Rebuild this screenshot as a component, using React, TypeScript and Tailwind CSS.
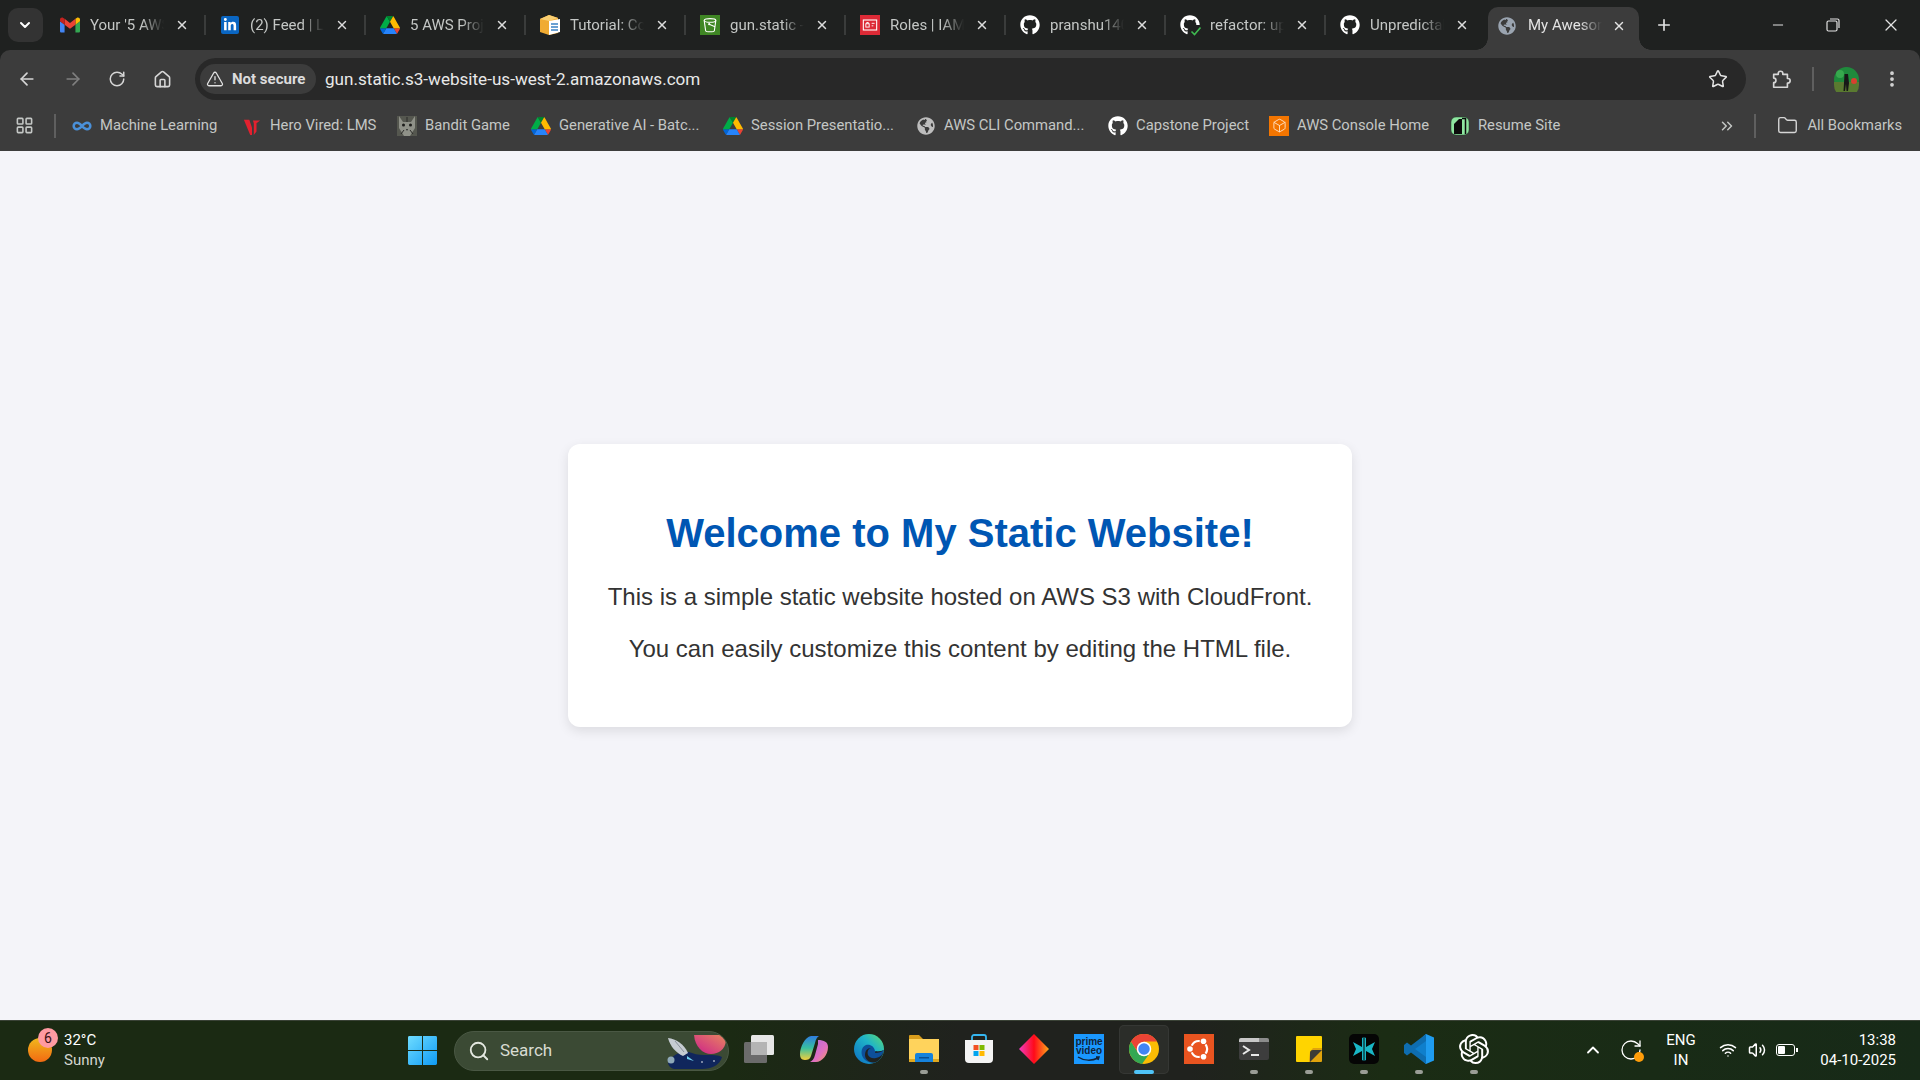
import React from "react";
import {
    ArrowLeft,
    ArrowRight,
    Box,
    ChevronDown,
    ChevronUp,
    ChevronsRight,
    EllipsisVertical,
    Folder,
    House,
    Infinity as InfinityIcon,
    LayoutGrid,
    Minus,
    Plus,
    RotateCw,
    Search,
    Star,
    TriangleAlert,
    Volume2,
    Wifi,
    X,
} from "lucide-react";
import { FaGithub, FaGlobeAmericas, FaLinkedinIn } from "react-icons/fa";
import { SiOpenai } from "react-icons/si";

const Gmail = () => (
    <svg viewBox="0 0 24 24" className="w-5 h-5">
        <path d="M1.6 21H5.5v-9.3L0 7.6v11.8C0 20.300.7 21 1.6 21z" fill="#4285f4" />
        <path d="M18.500 21h3.900c.9 0 1.600-.7 1.600-1.600V7.600l-5.500 4.100z" fill="#34a853" />
        <path d="M18.500 4.600v7.100L24 7.600V5.500c0-2.100-2.300-3.200-3.900-2z" fill="#fbbc04" />
        <path d="M5.500 11.700V4.600L12 9.500l6.500-4.900v7.100L12 16.600z" fill="#ea4335" />
        <path d="M0 5.500v2.100l5.500 4.100V4.600L3.900 3.500C2.300 2.300 0 3.400 0 5.500z" fill="#c5221f" />
    </svg>
);

const Drive = () => (
    <svg viewBox="0 0 87.300 78" className="w-5 h-5">
        <path d="m6.600 66.850 3.850 6.650c.8 1.400 1.950 2.500 3.300 3.300l13.750-23.800h-27.500c0 1.550.4 3.100 1.200 4.500z" fill="#0066da" />
        <path d="m43.650 25-13.750-23.800c-1.350.8-2.500 1.900-3.300 3.300l-25.400 44a9.060 9.060 0 0 0 -1.200 4.500h27.500z" fill="#00ac47" />
        <path d="m73.550 76.800c1.350-.8 2.500-1.900 3.300-3.300l1.600-2.750 7.650-13.250c.8-1.400 1.200-2.950 1.200-4.500h-27.502l5.852 11.500z" fill="#ea4335" />
        <path d="m43.650 25 13.750-23.800c-1.350-.8-2.900-1.200-4.500-1.200h-18.500c-1.600 0-3.150.45-4.500 1.200z" fill="#00832d" />
        <path d="m59.800 53h-32.300l-13.750 23.800c1.350.8 2.900 1.200 4.500 1.200h50.800c1.600 0 3.150-.45 4.500-1.200z" fill="#2684fc" />
        <path d="m73.400 26.500-12.700-22c-.8-1.400-1.950-2.500-3.300-3.300l-13.750 23.800 16.150 28h27.450c0-1.550-.4-3.100-1.200-4.500z" fill="#ffba00" />
    </svg>
);

const LinkedIn = () => (
    <div className="w-[18px] h-[18px] mx-px bg-[#0a66c2] rounded-[2px] flex items-center justify-center text-white">
        <FaLinkedinIn size={14} />
    </div>
);

const TutorialBox = () => (
    <svg viewBox="0 0 20 20" className="w-5 h-5">
        <path d="M0 4l9-4 9 3v15l-9 2-9-3z" fill="#f0ab32" />
        <path d="M0 4l9-4 9 3-9 3z" fill="#f9cf72" />
        <path d="M9 6l11-2v13l-11 3z" fill="#fff" />
        <path d="M11 9h7M11 12h7M11 15h7" stroke="#3b82c4" strokeWidth="1.400" />
    </svg>
);

const S3Icon = () => (
    <svg viewBox="0 0 24 24" className="w-5 h-5">
        <rect width="24" height="24" fill="#3f8624" />
        <ellipse cx="12" cy="6.500" rx="7" ry="2.200" fill="none" stroke="#fff" strokeWidth="1.300" />
        <path d="M5 6.500l1.800 12.500c.5 1.500 9.900 1.500 10.400 0L19 6.500" fill="none" stroke="#fff" strokeWidth="1.300" />
        <path d="M11 11l7 3" stroke="#fff" strokeWidth="1.300" />
        <circle cx="11" cy="11" r="1.300" fill="#fff" />
    </svg>
);

const IamIcon = () => (
    <svg viewBox="0 0 24 24" className="w-5 h-5">
        <rect width="24" height="24" fill="#dd2a36" />
        <rect x="4" y="6" width="16" height="12" fill="none" stroke="#fff" strokeWidth="1.300" />
        <rect x="7" y="10.500" width="4" height="4" fill="none" stroke="#fff" strokeWidth="1.100" />
        <path d="M8 10.500V9h2v1.500M14 10h3.500M14 13h2" stroke="#fff" strokeWidth="1.100" fill="none" />
    </svg>
);

const GithubCheck = () => (
    <div className="relative w-5 h-5 text-white">
        <FaGithub size={20} />
        <svg viewBox="0 0 12 12" className="absolute -right-0.5 -bottom-0.5 w-3 h-3">
            <rect width="12" height="12" fill="#1f2120" />
            <path d="M1.500 6.500l3 3 6-7" fill="none" stroke="#3fb950" strokeWidth="1.600" />
        </svg>
    </div>
);

const HeroVired = () => (
    <svg viewBox="0 0 20 20" className="w-[18px] h-5">
        <path d="M1 3h6l3 9v8H8z" fill="#e3212f" />
        <path d="M11 4h8l-4 3v9l-3 4V7z" fill="#e3212f" />
    </svg>
);

const BanditCat = () => (
    <svg viewBox="0 0 20 20" className="w-5 h-5">
        <rect width="20" height="20" fill="#55574f" />
        <path d="M2 0l4 6h8l4-6v12l-5 8H7l-5-8z" fill="#8f9188" />
        <circle cx="6.500" cy="9" r="1.500" fill="#1c1c1a" />
        <circle cx="13.500" cy="9" r="1.500" fill="#1c1c1a" />
        <path d="M9 13h2l-1 2z" fill="#2a2a28" />
        <path d="M4 18l3-4M16 18l-3-4M10 1v5" stroke="#2a2a28" strokeWidth="1" />
    </svg>
);

const AwsConsole = () => (
    <div className="w-5 h-5 bg-[#f37500] flex items-center justify-center text-[#ffe0c2]">
        <Box size={15} strokeWidth={1.500} />
    </div>
);

const ResumeIcon = () => (
    <svg viewBox="0 0 20 20" className="w-5 h-5">
        <rect x="1" y="1" width="18" height="18" rx="5" fill="#8ee6a0" stroke="#1d3d27" strokeWidth="0.500" />
        <path d="M4 18V8l5-5h3v15z" fill="#0c0c0c" />
        <path d="M12 2.500h3.500V18" fill="none" stroke="#0c0c0c" strokeWidth="1.500" />
    </svg>
);

const tabs = [
    { title: "Your '5 AWS Projects", icon: <Gmail /> },
    { title: "(2) Feed | LinkedIn", icon: <LinkedIn /> },
    { title: "5 AWS Projects", icon: <Drive /> },
    { title: "Tutorial: Configuring", icon: <TutorialBox /> },
    { title: "gun.static - S3 bucket", icon: <S3Icon /> },
    { title: "Roles | IAM | Global", icon: <IamIcon /> },
    { title: "pranshu1402/aws", icon: <FaGithub size={20} className="text-white" /> },
    { title: "refactor: update", icon: <GithubCheck /> },
    { title: "Unpredictable", icon: <FaGithub size={20} className="text-white" /> },
];

const bookmarks = [
    { label: "Machine Learning", cls: "w-[170px]", icon: <InfinityIcon size={20} strokeWidth={3} className="text-[#4a90d9]" /> },
    { label: "Hero Vired: LMS", cls: "w-[155px]", icon: <HeroVired /> },
    { label: "Bandit Game", cls: "w-[134px]", icon: <BanditCat /> },
    { label: "Generative AI - Batc...", cls: "w-[192px]", icon: <Drive /> },
    { label: "Session Presentatio...", cls: "w-[193px]", icon: <Drive /> },
    { label: "AWS CLI Command...", cls: "w-[192px]", icon: <FaGlobeAmericas size={18} className="text-[#bdbdbd] mx-px" /> },
    { label: "Capstone Project", cls: "w-[161px]", icon: <FaGithub size={20} className="text-white" /> },
    { label: "AWS Console Home", cls: "w-[181px]", icon: <AwsConsole /> },
    { label: "Resume Site", cls: "w-[130px]", icon: <ResumeIcon /> },
];

const TabStrip = () => (
    <div className="flex items-center h-[50px] bg-[#1f2120] text-[#c4c7c5] text-[15px]">
        <button className="ml-2 mr-[3.5px] w-[34.5px] h-[34px] rounded-[10px] bg-[#333333] flex items-center justify-center text-white">
            <ChevronDown size={16} strokeWidth={3} />
        </button>
        {tabs.map((tab, i) => (
            <div
                key={tab.title}
                className={
                    i === tabs.length - 1
                        ? "flex items-center w-40 h-5 pl-[14px]"
                        : "flex items-center w-40 h-5 pl-[14px] border-r-2 border-[#3a3c3b]"
                }
            >
                <div className="w-5 shrink-0">{tab.icon}</div>
                <span className="ml-[10px] w-[74px] overflow-hidden whitespace-nowrap [mask-image:linear-gradient(to_right,black_70%,transparent)]">
                    {tab.title}
                </span>
                <X size={14} strokeWidth={2.500} className="ml-[11px] text-[#dcdcdc] shrink-0" />
            </div>
        ))}
        <div className="relative flex items-center self-end h-[43px] w-[151px] ml-[2px] pl-[10px] pb-[6px] bg-[#3c3c3c] rounded-t-[10px] text-[#e3e3e3]">
            <span className="absolute -left-3 bottom-0 w-3 h-3 bg-[radial-gradient(circle_at_0_0,transparent_11.500px,#3c3c3c_12px)]" />
            <span className="absolute -right-3 bottom-0 w-3 h-3 bg-[radial-gradient(circle_at_100%_0,transparent_11.500px,#3c3c3c_12px)]" />
            <FaGlobeAmericas size={18} className="text-[#9aa4b0] shrink-0" />
            <span className="ml-3 w-[74px] overflow-hidden whitespace-nowrap [mask-image:linear-gradient(to_right,black_70%,transparent)]">
                My Awesome Website
            </span>
            <X size={14} strokeWidth={2.500} className="ml-[10px] text-[#e3e3e3] shrink-0" />
        </div>
        <Plus size={18} strokeWidth={2.200} className="ml-4 text-[#e3e3e3]" />
        <div className="ml-auto flex items-center text-[#e3e3e3]">
            <Minus size={16} strokeWidth={1.500} className="mr-10" />
            <svg viewBox="0 0 14 14" className="w-[14px] h-[14px] mr-[41px]" fill="none" stroke="currentColor" strokeWidth="1.200">
                <rect x="1" y="3" width="10" height="10" rx="1.500" />
                <path d="M4 1h7.500A1.500 1.500 0 0 1 13 2.500V10" />
            </svg>
            <X size={20} strokeWidth={1.500} className="mr-[19px]" />
        </div>
    </div>
);

const Toolbar = () => (
    <div className="flex items-center h-[50px] pt-2 bg-[#3c3c3c] rounded-t-[10px] text-[#d6d6d6]">
        <ArrowLeft size={20} className="ml-[17px]" />
        <ArrowRight size={20} className="ml-[26px] text-[#7f7f7f]" />
        <RotateCw size={18} className="ml-[25px]" />
        <House size={19} className="ml-[27px]" />
        <div className="ml-[23px] flex items-center w-[1551px] h-[42px] rounded-full bg-[#282828]">
            <div className="ml-[5px] flex items-center w-[116px] h-[30px] rounded-full bg-[#3c3c3c] pl-[6px] text-[#e3e3e3]">
                <TriangleAlert size={18} strokeWidth={1.700} />
                <span className="ml-2 text-[15px] font-bold text-[#dcdcdc] whitespace-nowrap">Not secure</span>
            </div>
            <span className="ml-[9px] pt-[2px] text-[17.100px] text-[#e8e8e8] whitespace-nowrap">
                gun.static.s3-website-us-west-2.amazonaws.com
            </span>
            <Star size={20} strokeWidth={1.800} className="ml-auto mr-[18px] text-[#e3e3e3]" />
        </div>
        <svg viewBox="0 0 24 24" className="ml-6 w-[22px] h-[22px]" fill="none" stroke="currentColor" strokeWidth="1.800" strokeLinejoin="round">
            <path d="M4 21v-5a2.500 2.500 0 0 0 0-5V7h5V6a2.500 2.500 0 0 1 5 0v1h5v4.500h.5a2.500 2.500 0 0 1 0 5H19V21z" />
        </svg>
        <div className="ml-5 w-0.5 h-6 bg-[#5f5f5f]" />
        <svg viewBox="0 0 25 25" className="ml-5 w-[25px] h-[25px]">
            <circle cx="12.500" cy="12.500" r="12.500" fill="#1f8a3c" />
            <circle cx="6" cy="7" r="4" fill="#37a84e" />
            <path d="M0 15h25v3a12.500 12.500 0 0 1-25 0z" fill="#5a7a30" />
            <circle cx="20" cy="14" r="3" fill="#d8402f" />
            <path d="M10.500 7h3.500l1 9-1 8h-1.500l-.5-7-1 7H9.500l.5-8z" fill="#171717" />
        </svg>
        <EllipsisVertical size={20} strokeWidth={2.500} className="ml-[23px]" />
    </div>
);

const BookmarksBar = () => (
    <div className="flex items-center h-[51px] bg-[#3c3c3c] text-[14.800px] text-[#c4c7c5] whitespace-nowrap">
        <LayoutGrid size={19} strokeWidth={2} className="ml-[15px]" />
        <div className="ml-[19.5px] mr-[16.5px] w-0.5 h-6 bg-[#5f5f5f]" />
        {bookmarks.map((b) => (
            <div key={b.label} className={"flex items-center gap-2 shrink-0 " + b.cls}>
                <div className="w-5 flex justify-center shrink-0">{b.icon}</div>
                <span>{b.label}</span>
            </div>
        ))}
        <ChevronsRight size={18} className="ml-auto" />
        <div className="ml-[18px] w-0.5 h-6 bg-[#5f5f5f]" />
        <Folder size={21} strokeWidth={1.600} className="ml-[21px] text-[#d6d6d6]" />
        <span className="ml-[9px] mr-[18px] text-[14.700px]">All Bookmarks</span>
    </div>
);

const WindowsLogo = () => (
    <svg viewBox="0 0 30 30" className="w-[29px] h-[29px]">
        <defs>
            <linearGradient id="win" x1="0" y1="0" x2="1" y2="1">
                <stop offset="0" stopColor="#6fdcff" />
                <stop offset="1" stopColor="#0f9bf5" />
            </linearGradient>
        </defs>
        <path d="M0 1.500A1.500 1.500 0 0 1 1.500 0H14.500V14.500H0zM15.500 0H28.500A1.500 1.500 0 0 1 30 1.500V14.500H15.500zM0 15.500H14.500V30H1.500A1.500 1.500 0 0 1 0 28.500zM15.500 15.500H30V28.500A1.500 1.500 0 0 1 28.500 30H15.500z" fill="url(#win)" />
    </svg>
);

const SearchArt = () => (
    <svg viewBox="0 0 62 40" className="w-[62px] h-10 shrink-0">
        <defs>
            <linearGradient id="planet" x1="0" y1="1" x2="1" y2="0">
                <stop offset="0" stopColor="#cc1f8c" />
                <stop offset="1" stopColor="#e8855f" />
            </linearGradient>
        </defs>
        <path d="M2 32c4-8 14-14 24-10 10 4 22 0 30 4-2 8-10 12-20 12H10C6 38 3 36 2 32z" fill="#10265c" />
        <circle cx="5" cy="29" r="3.500" fill="#8fa9b8" />
        <path d="M28 4h30a18 18 0 0 1 2 6c-1 8-7 13-15 13S29 16 28 4z" fill="url(#planet)" />
        <path d="M2 7c8 1 16 6 20 15l-5 3C10 22 4 15 2 7z" fill="#c6ccd2" />
        <path d="M9 10l9 11" stroke="#8a929b" strokeWidth="1" />
        <path d="M21 25l7 5-7-2z" fill="#6fd0f0" />
        <circle cx="36" cy="31" r="0.800" fill="#fff" />
        <circle cx="48" cy="30" r="0.800" fill="#fff" />
    </svg>
);

const Copilot = () => (
    <svg viewBox="0 0 30 30" className="w-[30px] h-[30px]">
        <defs>
            <linearGradient id="cpA" x1="0" y1="0" x2="0" y2="1">
                <stop offset="0" stopColor="#2f7de0" />
                <stop offset="0.500" stopColor="#38c0a0" />
                <stop offset="1" stopColor="#f2d03c" />
            </linearGradient>
            <linearGradient id="cpB" x1="0" y1="0" x2="1" y2="1">
                <stop offset="0" stopColor="#b06ce0" />
                <stop offset="0.600" stopColor="#e070c0" />
                <stop offset="1" stopColor="#f2a05a" />
            </linearGradient>
        </defs>
        <path d="M12 2h8c-2 1-3 3-4 7l-4 13c-1 3-3 4-6 4-4 0-5-3-5-6C1 13 6 3 12 2z" fill="url(#cpA)" />
        <path d="M19 6c6 0 10 2 10 7 0 8-6 15-12 15h-6c2-1 4-3 5-7l3-11c0-2 0-3 0-4z" fill="url(#cpB)" />
    </svg>
);

const Edge = () => (
    <svg viewBox="0 0 30 30" className="w-[30px] h-[30px]">
        <defs>
            <linearGradient id="edgeA" x1="1" y1="0" x2="0" y2="1">
                <stop offset="0" stopColor="#5fdc70" />
                <stop offset="0.400" stopColor="#1fb4c8" />
                <stop offset="1" stopColor="#0c6cc4" />
            </linearGradient>
        </defs>
        <circle cx="15" cy="15" r="15" fill="url(#edgeA)" />
        <path d="M30 16c-2 1-6 2-9 1-1-5-5-7-9-6-5 2-6 9-2 14 3 3 8 5 12 3 3-2 6-5 8-12z" fill="#0d4f9a" />
        <path d="M30 16c-2 2-6 3-9 3 1-2 0-2 0-2 3 1 7 0 9-1zM22 28c4-2 7-6 8-12-1 4-3 7-8 8-4 1-7-1-8-3-1-3 0-6 3-7-4 0-6 3-6 7 0 5 6 9 11 7z" fill="#1f2220" />
    </svg>
);

const Explorer = () => (
    <svg viewBox="0 0 30 30" className="w-[30px] h-[30px]">
        <path d="M0 2a1 1 0 0 1 1-1h9l4 4h-14z" fill="#d89d1c" />
        <path d="M0 5h30v22a1 1 0 0 1-1 1H1a1 1 0 0 1-1-1z" fill="#ffd35c" />
        <path d="M0 25h30v2a1 1 0 0 1-1 1H1a1 1 0 0 1-1-1z" fill="#e0a81e" />
        <path d="M6 28v-7a2 2 0 0 1 2-2h14a2 2 0 0 1 2 2v7z" fill="#1682dc" />
        <rect x="10" y="23" width="10" height="1.500" fill="#0b4f92" />
    </svg>
);

const Store = () => (
    <svg viewBox="0 0 30 30" className="w-[30px] h-[30px]">
        <path d="M8 8V3a2 2 0 0 1 2-2h10a2 2 0 0 1 2 2v5" fill="none" stroke="#35b6f0" strokeWidth="1.800" />
        <path d="M1 6h28v19a4 4 0 0 1-4 4H5a4 4 0 0 1-4-4z" fill="#f4f4f4" />
        <rect x="9.500" y="11" width="5" height="5" fill="#f25022" />
        <rect x="15.500" y="11" width="5" height="5" fill="#7fba00" />
        <rect x="9.500" y="17" width="5" height="5" fill="#00a4ef" />
        <rect x="15.500" y="17" width="5" height="5" fill="#ffb900" />
    </svg>
);

const Diamond = () => (
    <svg viewBox="0 0 30 30" className="w-[30px] h-[30px]">
        <defs>
            <linearGradient id="dia" x1="0" y1="0" x2="1" y2="0">
                <stop offset="0" stopColor="#f03cc0" />
                <stop offset="0.500" stopColor="#ff0a1a" />
                <stop offset="1" stopColor="#ffa81a" />
            </linearGradient>
        </defs>
        <path d="M15 0l15 15-15 15L0 15z" fill="url(#dia)" />
    </svg>
);

const PrimeVideo = () => (
    <div className="w-[30px] h-[30px] bg-[#1a98ff] flex flex-col items-center font-['Liberation_Sans',sans-serif] font-bold text-[10px] leading-[9px] text-[#10243a] pt-[3px]">
        <span>prime</span>
        <span>video</span>
        <svg viewBox="0 0 24 6" className="w-6 h-[6px] mt-px">
            <path d="M1 1c6 4 14 4 20 1M19 1l3 0-1 3" fill="none" stroke="#10243a" strokeWidth="1.500" />
        </svg>
    </div>
);

const Chrome = () => (
    <svg viewBox="0 0 24 24" className="w-[30px] h-[30px]">
        <circle cx="12" cy="12" r="12" fill="#fbbc04" />
        <path d="M1.600 6A12 12 0 0 0 10.400 23.900L17 14.750H7.240z" fill="#34a853" />
        <path d="M1.600 6A12 12 0 0 1 22.400 6H12L7.240 14.750z" fill="#ea4335" />
        <circle cx="12" cy="12" r="5.800" fill="#fff" />
        <circle cx="12" cy="12" r="4.600" fill="#4285f4" />
    </svg>
);

const Ubuntu = () => (
    <svg viewBox="0 0 30 30" className="w-[30px] h-[30px]">
        <rect width="30" height="30" fill="#e95420" />
        <path
            d="M7.750 11.620A8 8 0 0 1 15.700 7.030M21.550 10.410A8 8 0 0 1 21.550 19.590M15.700 22.970A8 8 0 0 1 7.750 18.380"
            fill="none"
            stroke="#fff"
            strokeWidth="2.200"
        />
        <circle cx="6" cy="15" r="2.800" fill="#fff" />
        <circle cx="19.500" cy="7.200" r="2.800" fill="#fff" />
        <circle cx="19.500" cy="22.800" r="2.800" fill="#fff" />
    </svg>
);

const Terminal = () => (
    <svg viewBox="0 0 30 22" className="w-[30px] h-[22px]">
        <rect width="30" height="22" rx="2" fill="#3d3d3d" />
        <path d="M0 2a2 2 0 0 1 2-2h18v4H0z" fill="#c8c8c8" />
        <path d="M20 0h8a2 2 0 0 1 2 2v2H20z" fill="#8c8c8c" />
        <path d="M4 8l6 4-6 4" fill="none" stroke="#e8e8e8" strokeWidth="2" />
        <path d="M12 17h8" stroke="#e8e8e8" strokeWidth="2" />
    </svg>
);

const Notes = () => (
    <svg viewBox="0 0 26 26" className="w-[26px] h-[26px]">
        <path d="M1 0h24a1 1 0 0 1 1 1v16l-9 9H1a1 1 0 0 1-1-1V1a1 1 0 0 1 1-1z" fill="#ffd400" />
        <path d="M26 12v13a1 1 0 0 1-1 1H13v-2l1-8 3-4z" fill="#e0a30c" />
        <path d="M14 26v-9a3 3 0 0 1 3-3h9z" fill="#3b3b36" />
    </svg>
);

const CursorStar = () => (
    <svg viewBox="0 0 30 30" className="w-[30px] h-[30px]">
        <rect width="30" height="30" rx="5" fill="#050505" />
        <path d="M4 8l9 5V4l2-1 2 1v9l9-5-3 7 3 7-9-5v9l-2 1-2-1v-9l-9 5 3-7z" fill="#19b6c6" />
        <path d="M15 3v24" stroke="#050505" strokeWidth="1" />
    </svg>
);

const VsCode = () => (
    <svg viewBox="0 0 30 30" className="w-[30px] h-[30px]">
        <path d="M22 0l8 3.500v23L22 30 8 17z" fill="#1f9cf0" />
        <path d="M22 0v30l-2.500-2L8 17 19.500 2z" fill="#0f7fcc" />
        <path d="M22 7L11 15l11 8v7L7 18.500l-4 3-3-2.500v-8l3-2.500 4 3L22 0z" fill="#0e6db0" />
    </svg>
);

const apps = [
    { key: "taskview", dot: "", node: (
        <svg viewBox="0 0 30 30" className="w-[30px] h-[30px]">
            <rect x="0" y="8" width="23" height="21" rx="1.500" fill="#6b6b6b" />
            <rect x="7" y="1" width="23" height="20" rx="1.500" fill="#e6e6e6" />
            <rect x="7" y="8" width="16" height="13" fill="#b4b4b4" />
        </svg>
    ) },
    { key: "copilot", dot: "", node: <Copilot /> },
    { key: "edge", dot: "", node: <Edge /> },
    { key: "explorer", dot: "gray", node: <Explorer /> },
    { key: "store", dot: "", node: <Store /> },
    { key: "diamond", dot: "", node: <Diamond /> },
    { key: "prime", dot: "", node: <PrimeVideo /> },
    { key: "chrome", dot: "blue", node: <Chrome /> },
    { key: "ubuntu", dot: "", node: <Ubuntu /> },
    { key: "terminal", dot: "gray", node: <Terminal /> },
    { key: "notes", dot: "gray", node: <Notes /> },
    { key: "cursor", dot: "gray", node: <CursorStar /> },
    { key: "vscode", dot: "gray", node: <VsCode /> },
    { key: "openai", dot: "gray", node: <SiOpenai size={30} className="text-white" /> },
];

const Taskbar = () => (
    <div className="flex items-center h-[60px] border-t border-[#3a4236] bg-[linear-gradient(to_right,#1b2a13_0%,#1b2a13_38%,#20221e_50%,#20221e_62%,#1b2c14_72%,#172a18_100%)] text-white">
        <div className="relative flex items-center w-[408px] h-full shrink-0 pl-[64px] text-[15px] leading-5 pb-[2px]">
            <div className="absolute left-[28px] top-[17px] w-6 h-6 rounded-full bg-[linear-gradient(to_bottom,#f0b81c,#f26a12)]" />
            <div className="absolute left-[38px] top-[7px] w-5 h-5 rounded-full bg-[#ff9aa2] text-[#3a1015] text-[14px] leading-5 text-center">
                6
            </div>
            <div className="flex flex-col">
                <span>32°C</span>
                <span className="text-[#d4d6d0]">Sunny</span>
            </div>
        </div>
        <WindowsLogo />
        <div className="ml-[17px] flex items-center w-[275px] h-10 rounded-full bg-[#3b4a34] border border-[#4a5844] overflow-hidden shrink-0">
            <Search size={22} strokeWidth={2} className="ml-[13px] text-[#e4e8e0]" />
            <span className="ml-[10px] text-[17px] text-[#d8dcd2]">Search</span>
            <div className="ml-auto">
                <SearchArt />
            </div>
        </div>
        <div className="ml-[2.500px] flex items-center h-full">
            {apps.map((app) => (
                <div key={app.key} className="relative flex items-center justify-center w-[55px] h-full">
                    {app.key === "chrome" && (
                        <div className="absolute left-[2.500px] top-[4px] w-[50px] h-[49px] rounded-[5px] bg-white/5 border border-white/5" />
                    )}
                    <div className="relative -mt-[3px]">{app.node}</div>
                    {app.dot === "gray" && (
                        <div className="absolute bottom-[6px] left-[23.500px] w-2 h-1 rounded-full bg-[#9a9d96]" />
                    )}
                    {app.dot === "blue" && (
                        <div className="absolute bottom-[6px] left-[17.500px] w-5 h-1 rounded-full bg-[#4fc3f7]" />
                    )}
                </div>
            ))}
        </div>
        <div className="ml-auto flex items-center text-[15px] leading-5 pr-6 pb-[2px]">
            <ChevronUp size={20} strokeWidth={2.200} />
            <div className="relative ml-4 w-6 h-6">
                <RotateCw size={24} strokeWidth={1.300} />
                <div className="absolute right-[-1px] bottom-0 w-[10px] h-[10px] rounded-full bg-[#ff9d0a]" />
            </div>
            <div className="ml-[18px] w-10 flex flex-col items-center">
                <span>ENG</span>
                <span>IN</span>
            </div>
            <Wifi size={18} className="ml-[18px]" />
            <Volume2 size={18} className="ml-[11px]" />
            <svg viewBox="0 0 22 12" className="ml-[10px] w-[22px] h-3">
                <rect x="0.500" y="0.500" width="18" height="11" rx="2.500" fill="none" stroke="#fff" />
                <rect x="2" y="2" width="7" height="8" rx="1" fill="#fff" />
                <rect x="20" y="4" width="2" height="4" fill="#fff" />
            </svg>
            <div className="ml-[18px] w-20 flex flex-col items-end">
                <span>13:38</span>
                <span>04-10-2025</span>
            </div>
        </div>
    </div>
);

const App = () => {
    return (
        <div className="flex flex-col w-[1920px] h-[1080px] overflow-hidden bg-[#1f2120] font-['Roboto',sans-serif]">
            <TabStrip />
            <Toolbar />
            <BookmarksBar />
            <main className="flex-1 flex items-center justify-center bg-[#f4f4f9] font-['Liberation_Sans',Arial,sans-serif]">
                <div className="w-[784px] h-[283px] pt-[66px] rounded-xl bg-white text-center shadow-[0_4px_12px_rgba(0,0,0,0.1)]">
                    <h1 className="text-[40px] leading-[46px] font-bold text-[#0056b3]">
                        Welcome to My Static Website!
                    </h1>
                    <p className="mt-[27px] text-[24px] leading-[28px] text-[#333333]">
                        This is a simple static website hosted on AWS S3 with CloudFront.
                    </p>
                    <p className="mt-6 text-[24px] leading-[28px] text-[#333333]">
                        You can easily customize this content by editing the HTML file.
                    </p>
                </div>
            </main>
            <Taskbar />
        </div>
    );
};

export default App;
